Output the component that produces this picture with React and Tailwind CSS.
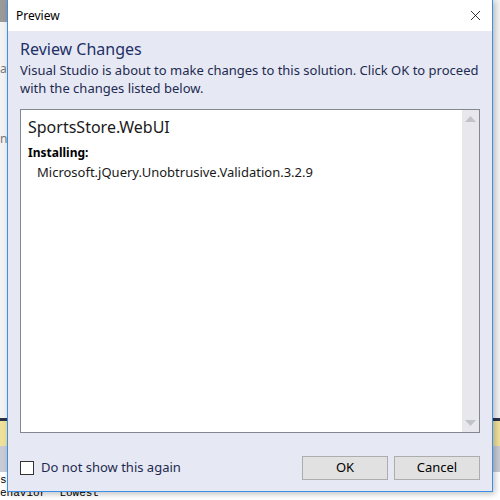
import { X } from 'lucide-react'

const font = { fontFamily: '"Noto Sans", "Liberation Sans", sans-serif' }

const Triangle = ({ up }) => (
  <svg width="11" height="6" viewBox="0 0 11 6">
    <polygon points={up ? '0,6 11,6 5.5,0' : '0,0 11,0 5.5,6'} fill="#c2c3c9" />
  </svg>
)

export default function App() {
  return (
    <div className="relative w-[500px] h-[500px] overflow-hidden bg-[#f3f3f3]" style={font}>
      {/* background window fragments */}
      <div className="absolute left-0 top-0 w-[8px] h-[22px] bg-[#9a9a9a]" />
      <div className="absolute left-0 top-[60px] text-[12px] text-[#777]">at</div>
      <div className="absolute left-0 top-[130px] text-[12px] text-[#777]">nV</div>
      <div className="absolute left-0 top-[418px] w-full h-[3px] bg-[#2b3148]" />
      <div className="absolute left-0 top-[421px] w-full h-[25px] bg-[#efe19b]" />
      <div className="absolute left-0 top-[446px] w-full h-[26px] bg-[#c8cbd4]" />
      <div className="absolute left-0 top-[472px] w-full h-[28px] bg-white" />
      <div className="absolute left-0 top-[474px] font-['Liberation_Mono'] text-[11px] leading-[13px] text-black">
        <div>s</div>
        <div className="whitespace-pre">enavior  Lowest</div>
      </div>

      {/* dialog */}
      <div className="absolute left-[7px] top-[-1px] w-[486px] h-[493px] border border-[#3d8ee6] bg-[#e6e9f4] flex flex-col shadow-[2px_2px_6px_rgba(0,0,0,0.25)]">
        <div className="h-[31px] bg-white flex items-center justify-between pl-[8px] pr-[8px] shrink-0">
          <span className="text-[12px] text-black">Preview</span>
          <X className="w-[17px] h-[17px] text-black" strokeWidth={1.1} />
        </div>

        <div className="flex flex-col flex-1 px-[12px]">
          <div className="mt-[7px] text-[16px] leading-[22px] text-[#1e3066]">Review Changes</div>
          <div className="mt-[1px] text-[13px] leading-[18px] text-[#1e2a50]">
            Visual Studio is about to make changes to this solution. Click OK to proceed
            <br />
            with the changes listed below.
          </div>

          <div className="mt-[12px] h-[324px] border border-[#828790] bg-white flex">
            <div className="flex-1 pl-[7px] pt-[6px]">
              <div className="text-[16px] leading-[22px] text-[#1a1a1a]">SportsStore.WebUI</div>
              <div className="mt-[7px] text-[12px] leading-[16px] font-bold text-black">Installing:</div>
              <div className="pl-[9px] mt-[2px] text-[13px] leading-[18px] text-[#1a1a1a]">
                Microsoft.jQuery.Unobtrusive.Validation.3.2.9
              </div>
            </div>
            <div className="w-[17px] bg-[#e8e8ec] flex flex-col items-center justify-between py-[6px]">
              <Triangle up />
              <Triangle />
            </div>
          </div>

          <div className="mt-[23px] flex items-center justify-between">
            <label className="flex items-center gap-[7px]">
              <span className="w-[14px] h-[14px] border border-[#333] bg-white" />
              <span className="text-[13px] text-[#1e2a50]">Do not show this again</span>
            </label>
            <div className="flex gap-[6px]">
              <button className="w-[86px] h-[24px] border border-[#adadad] bg-[#e1e1e1] text-[13px] text-black">OK</button>
              <button className="w-[86px] h-[24px] border border-[#adadad] bg-[#e1e1e1] text-[13px] text-black">Cancel</button>
            </div>
          </div>
        </div>
      </div>
    </div>
  )
}
